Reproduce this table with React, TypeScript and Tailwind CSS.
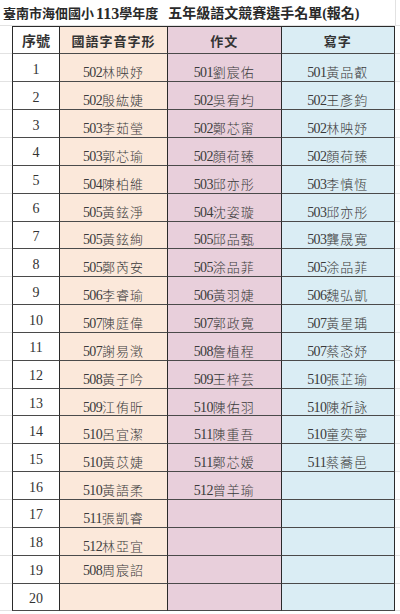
import React from "react";

const rows: [string, string, string][] = [
  ["502林映妤", "501劉宸佑", "501黃品叡"],
  ["502殷紘婕", "502吳宥均", "502王彥鈞"],
  ["503李茹瑩", "502鄭芯甯", "502林映妤"],
  ["503郭芯瑜", "502顏荷臻", "502顏荷臻"],
  ["504陳柏維", "503邱亦彤", "503李慎恆"],
  ["505黃鉉淨", "504沈姿璇", "503邱亦彤"],
  ["505黃鉉絢", "505邱品甄", "503龔晟寬"],
  ["505鄭芮安", "505涂品菲", "505涂品菲"],
  ["506李睿瑜", "506黃羽婕", "506魏弘凱"],
  ["507陳庭偉", "507郭政寬", "507黃星瑀"],
  ["507謝易澂", "508詹植程", "507蔡忞妤"],
  ["508黃子吟", "509王梓芸", "510張芷瑜"],
  ["509江侑昕", "510陳佑羽", "510陳祈詠"],
  ["510呂宜潔", "511陳重吾", "510童奕寧"],
  ["510黃苡婕", "511鄭芯嫒", "511蔡蕎邑"],
  ["510黃語柔", "512曾羊瑜", ""],
  ["511張凱睿", "", ""],
  ["512林亞宜", "", ""],
  ["508周宸詔", "", ""],
  ["", "", ""],
];

const FONT = { fontFamily: "'Liberation Serif', 'Noto Sans CJK TC', serif" };

function Name({ v }: { v: string }) {
  if (!v) return null;
  return (
    <span className="whitespace-nowrap text-[#3a3a3a]">
      <span className="text-[14px] tracking-[-0.6px]">{v.slice(0, 3)}</span>
      <span className="text-[13px] tracking-[1px] font-light">{v.slice(3)}</span>
    </span>
  );
}

export default function App() {
  return (
    <div className="w-[400px] h-[614px] bg-white overflow-hidden" style={FONT}>
      {/* title row */}
      <div className="flex h-[26.3px]">
        <div className="w-[395px] flex items-center pl-[3px] pt-[2px] font-bold text-[#2a2a2a] whitespace-nowrap border-b border-[#e2e2e2]">
          <span className="text-[13px]">臺南市海佃國小</span>
          <span className="text-[16px] ml-[2px]">113</span>
          <span className="text-[13px]">學年度</span>
          <span className="w-[10px]" />
          <span className="text-[14px]">五年級語文競賽選手名單</span>
          <span className="text-[14px]">(報名)</span>
        </div>
        <div className="w-[5px] border-l border-b border-[#e2e2e2]" />
      </div>

      {/* header row */}
      <div className="flex h-[28.2px]">
        <div className="w-[12px] border-b border-[#e2e2e2]" />
        <div className="w-[48px] border-l border-r border-t border-b border-l-[#2a2a2a] border-r-[#2a2a2a] border-t-[#2a2a2a] border-b-[#4a4a4a] bg-white flex items-center justify-center pt-[3px] text-[14px] font-bold text-[#333]">
          序號
        </div>
        <div className="w-[108px] border-r border-t border-b border-r-[#2a2a2a] border-t-[#2a2a2a] border-b-[#4a4a4a] bg-[#fbe8da] flex items-center justify-center pt-[3px] text-[13px] tracking-[1px] font-bold text-[#333]">
          國語字音字形
        </div>
        <div className="w-[113.5px] border-r border-t border-b border-r-[#2a2a2a] border-t-[#2a2a2a] border-b-[#4a4a4a] bg-[#e8cfdb] flex items-center justify-center pt-[3px] text-[13px] tracking-[1px] font-bold text-[#333]">
          作文
        </div>
        <div className="w-[113.5px] border-r border-t border-b border-r-[#2a2a2a] border-t-[#2a2a2a] border-b-[#4a4a4a] bg-[#daedf4] flex items-center justify-center pt-[3px] text-[13px] tracking-[1px] font-bold text-[#333]">
          寫字
        </div>
        <div className="w-[5px] border-b border-[#e2e2e2]" />
      </div>

      {rows.map((r, i) => {
        const namePad = i === 18 ? "pt-[2px]" : "pt-[9px]";
        return (
          <div key={i} className="flex h-[27.85px]">
            <div className="w-[12px] border-b border-[#e2e2e2]" />
            <div className="w-[48px] border-l border-r border-b border-l-[#2a2a2a] border-r-[#2a2a2a] border-b-[#4a4a4a] bg-white flex items-center justify-center pt-[3px] text-[14px] text-[#333]">
              {i + 1}
            </div>
            <div className={`w-[108px] border-r border-b border-r-[#2a2a2a] border-b-[#4a4a4a] bg-[#fbe8da] flex items-center justify-center ${namePad}`}>
              <Name v={r[0]} />
            </div>
            <div className="w-[113.5px] border-r border-b border-r-[#2a2a2a] border-b-[#4a4a4a] bg-[#e8cfdb] flex items-center justify-center pt-[9px]">
              <Name v={r[1]} />
            </div>
            <div className="w-[113.5px] border-r border-b border-r-[#2a2a2a] border-b-[#4a4a4a] bg-[#daedf4] flex items-center justify-center pt-[9px]">
              <Name v={r[2]} />
            </div>
            <div className="w-[5px] border-b border-[#e2e2e2]" />
          </div>
        );
      })}
    </div>
  );
}
